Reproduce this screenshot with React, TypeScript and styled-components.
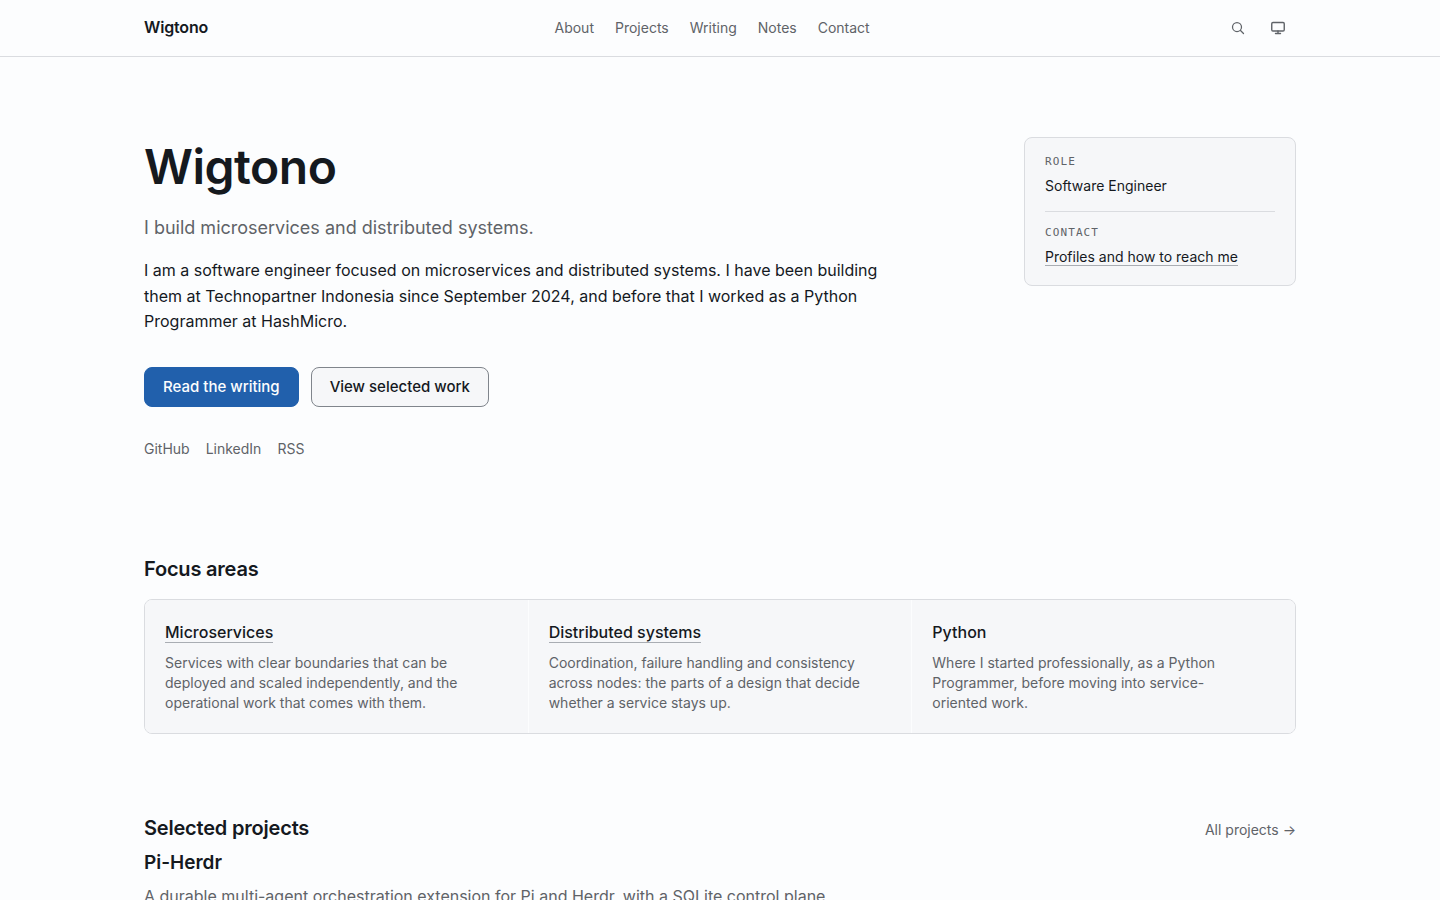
import React from "react";
import styled, { createGlobalStyle } from "styled-components";

const GlobalStyle = createGlobalStyle`
  *, *::before, *::after { box-sizing: border-box; }
  body {
    margin: 0;
    background: #fcfdfe;
    color: #15191e;
    font-family: Inter, "Liberation Sans", sans-serif;
    font-size: 16px;
    line-height: 1.6;
    -webkit-font-smoothing: antialiased;
  }
  h1, h2, h3, p, dl, dd, ul { margin: 0; padding: 0; }
  ul { list-style: none; }
  a { color: inherit; text-decoration: none; }
`;

const Container = styled.div`
  max-width: 1200px;
  margin: 0 auto;
  padding: 0 24px;
`;

const Header = styled.header`
  border-bottom: 1px solid #dadce0;
`;

const HeaderBar = styled(Container)`
  height: 56px;
  display: flex;
  align-items: center;
  justify-content: space-between;
`;

const Brand = styled.a`
  font-weight: 600;
  letter-spacing: -0.01em;
`;

const Nav = styled.nav`
  display: flex;
  gap: 21px;
  font-size: 14px;
  color: #5f6368;
`;

const Tools = styled.div`
  display: flex;
  gap: 4px;
  padding-left: 4px;
`;

const IconButton = styled.button`
  width: 36px;
  height: 36px;
  display: grid;
  place-items: center;
  padding: 0;
  border: 0;
  background: none;
  color: #5f6368;
`;

const Hero = styled.section`
  display: grid;
  grid-template-columns: minmax(0, 1fr) 272px;
  align-items: start;
  gap: 48px;
  padding: 80px 0 96px;
`;

const Title = styled.h1`
  font-size: 48px;
  line-height: 60px;
  font-weight: 600;
  letter-spacing: -0.01em;
`;

const Tagline = styled.p`
  margin-top: 16px;
  font-size: 18px;
  font-optical-sizing: none;
  line-height: 29px;
  color: #5f6368;
`;

const Intro = styled.p`
  max-width: 736px;
  margin-top: 16px;
`;

const Actions = styled.div`
  display: flex;
  gap: 12px;
  margin-top: 32px;
`;

const ButtonLink = styled.a<{ $primary?: boolean }>`
  height: 40px;
  padding: 0 18px;
  display: flex;
  align-items: center;
  border: 1px solid ${(p) => (p.$primary ? "#2160ac" : "#80858c")};
  border-radius: 8px;
  background: ${(p) => (p.$primary ? "#2160ac" : "#f6f7f9")};
  color: ${(p) => (p.$primary ? "#fcfdfe" : "#15191e")};
  font-size: 15px;
  font-weight: 500;
`;

const Profiles = styled.div`
  display: flex;
  gap: 16px;
  margin-top: 32px;
  font-size: 14px;
  line-height: 20px;
  color: #5f6368;
`;

const Facts = styled.dl`
  padding: 16px 20px;
  border: 1px solid #dadce0;
  border-radius: 8px;
  background: #f6f7f9;
`;

const Fact = styled.div`
  & + & {
    margin-top: 13px;
    padding-top: 13px;
    border-top: 1px solid #dadce0;
  }
  dt {
    font-family: "DejaVu Sans Mono", monospace;
    font-size: 11px;
    line-height: 16px;
    letter-spacing: 0.1em;
    text-transform: uppercase;
    color: #5f6368;
  }
  dd {
    margin-top: 4px;
    font-size: 14px;
    line-height: 24px;
  }
`;

const Underlined = styled.a`
  border-bottom: 1px solid #a9adb3;
`;

const Section = styled.section`
  padding-bottom: 80px;
`;

const SectionHead = styled.div`
  display: flex;
  align-items: baseline;
  justify-content: space-between;
`;

const SectionTitle = styled.h2`
  font-size: 20px;
  line-height: 28px;
  font-weight: 600;
  letter-spacing: -0.01em;
`;

const MoreLink = styled.a`
  font-size: 14px;
  line-height: 20px;
  color: #5f6368;
`;

const AreaGrid = styled.ul`
  display: grid;
  grid-template-columns: repeat(3, minmax(0, 1fr));
  gap: 1px;
  margin-top: 16px;
  border: 1px solid #dadce0;
  border-radius: 8px;
  background: #fcfdfe;
  overflow: hidden;
`;

const Area = styled.li`
  padding: 20px;
  background: #f6f7f9;
  h3 {
    font-size: 16px;
    line-height: 25px;
    font-weight: 500;
  }
  p {
    max-width: 320px;
    margin-top: 8px;
    font-size: 14px;
    line-height: 20px;
    color: #5f6368;
  }
`;

const Project = styled.article`
  max-width: 736px;
  margin-top: 6px;
  h3 {
    font-size: 19px;
    line-height: 30px;
    font-weight: 600;
  }
  p {
    margin-top: 6px;
    color: #5f6368;
  }
`;

const areas = [
  { name: "Microservices", linked: true, text: "Services with clear boundaries that can be deployed and scaled independently, and the operational work that comes with them." },
  { name: "Distributed systems", linked: true, text: "Coordination, failure handling and consistency across nodes: the parts of a design that decide whether a service stays up." },
  { name: "Python", linked: false, text: "Where I started professionally, as a Python Programmer, before moving into service-oriented work." },
];

export default function App() {
  return (
    <>
      <GlobalStyle />
      <Header>
        <HeaderBar>
          <Brand href="#">Wigtono</Brand>
          <Nav>
            {["About", "Projects", "Writing", "Notes", "Contact"].map((n) => (
              <a key={n} href={"#" + n.toLowerCase()}>{n}</a>
            ))}
          </Nav>
          <Tools>
            <IconButton aria-label="Search">
              <svg width="16" height="16" viewBox="0 0 16 16" fill="none" stroke="currentColor" strokeWidth="1.25" strokeLinecap="round">
                <circle cx="7" cy="7" r="4.5" />
                <path d="M10.5 10.5 13.5 13.5" />
              </svg>
            </IconButton>
            <IconButton aria-label="Theme">
              <svg width="16" height="16" viewBox="0 0 16 16" fill="none" stroke="currentColor" strokeWidth="1.4" strokeLinecap="round">
                <rect x="1.75" y="2.5" width="12.5" height="8.5" rx="1.25" />
                <path d="M5.5 13.5h5M8 11v2.5" />
              </svg>
            </IconButton>
          </Tools>
        </HeaderBar>
      </Header>
      <Container as="main">
        <Hero>
          <div>
            <Title>Wigtono</Title>
            <Tagline>I build microservices and distributed systems.</Tagline>
            <Intro>
              I am a software engineer focused on microservices and distributed systems. I have been building
              them at Technopartner Indonesia since September 2024, and before that I worked as a Python
              Programmer at HashMicro.
            </Intro>
            <Actions>
              <ButtonLink href="#writing" $primary>Read the writing</ButtonLink>
              <ButtonLink href="#projects">View selected work</ButtonLink>
            </Actions>
            <Profiles>
              <a href="#github">GitHub</a>
              <a href="#linkedin">LinkedIn</a>
              <a href="#rss">RSS</a>
            </Profiles>
          </div>
          <Facts>
            <Fact>
              <dt>Role</dt>
              <dd>Software Engineer</dd>
            </Fact>
            <Fact>
              <dt>Contact</dt>
              <dd><Underlined href="#contact">Profiles and how to reach me</Underlined></dd>
            </Fact>
          </Facts>
        </Hero>
        <Section>
          <SectionTitle>Focus areas</SectionTitle>
          <AreaGrid>
            {areas.map((a) => (
              <Area key={a.name}>
                <h3>{a.linked ? <Underlined href="#topics">{a.name}</Underlined> : a.name}</h3>
                <p>{a.text}</p>
              </Area>
            ))}
          </AreaGrid>
        </Section>
        <Section>
          <SectionHead>
            <SectionTitle>Selected projects</SectionTitle>
            <MoreLink href="#projects">All projects →</MoreLink>
          </SectionHead>
          <Project>
            <h3>Pi-Herdr</h3>
            <p>A durable multi-agent orchestration extension for Pi and Herdr, with a SQLite control plane</p>
          </Project>
        </Section>
      </Container>
    </>
  );
}
